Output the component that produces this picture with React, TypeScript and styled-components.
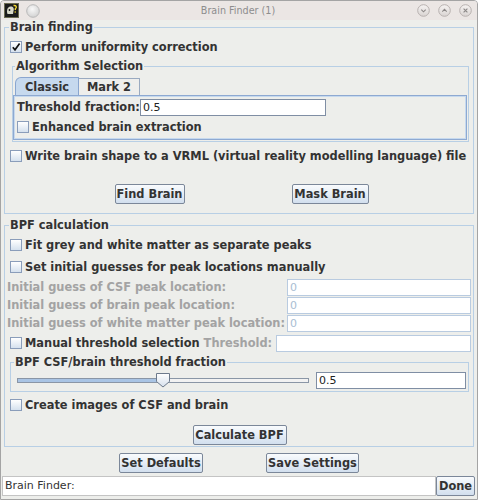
import React from 'react';
import styled, { createGlobalStyle } from 'styled-components';

const GlobalStyle = createGlobalStyle`
  html, body { margin: 0; padding: 0; background: #ffffff; }
  body { font-family: "DejaVu Sans", "Liberation Sans", sans-serif; }
  * { box-sizing: border-box; }
`;

const Frame = styled.div`
  width: 478px;
  height: 500px;
  border: 1px solid #a4a4a4;
  border-radius: 4px 4px 0 0;
  background: #edeeeb;
  display: flex;
  flex-direction: column;
  overflow: hidden;
`;

const TitleBar = styled.div`
  height: 19px;
  display: grid;
  grid-template-columns: 1fr auto 1fr;
  align-items: center;
  padding: 0 5px 0 3px;
  background: #ebe6e4;
  color: #8d8d8d;
  font-size: 9.6px;
`;

const TitleGroup = styled.div<{ $end?: boolean }>`
  display: flex;
  align-items: center;
  gap: ${(p) => (p.$end ? 8 : 7)}px;
  justify-content: ${(p) => (p.$end ? 'flex-end' : 'flex-start')};
`;

const Body = styled.div`
  flex: 1;
  display: flex;
  flex-direction: column;
  padding: 0 3px 0 3px;
`;

const Section = styled.fieldset<{ $mt?: number; $pad: string }>`
  margin: ${(p) => p.$mt ?? 0}px 0 0 0;
  padding: ${(p) => p.$pad};
  border: 1px solid #b8cfe5;
  min-width: 0;
  display: flex;
  flex-direction: column;
`;

const SubSection = styled(Section)<{ $ml?: number }>`
  margin-left: ${(p) => p.$ml ?? 0}px;
`;

const Legend = styled.legend<{ $shift?: number }>`
  padding: 0 1px;
  margin-left: ${(p) => p.$shift ?? 0}px;
  font-weight: bold;
  font-size: 11.4px;
  line-height: 14px;
  color: #333333;
`;

const Row = styled.div<{ $h: number; $mt?: number; $mx?: string }>`
  display: flex;
  align-items: center;
  height: ${(p) => p.$h}px;
  margin: ${(p) => p.$mt ?? 0}px ${(p) => p.$mx ?? '0 0'};
  margin-top: ${(p) => p.$mt ?? 0}px;
  margin-bottom: 0;
  white-space: nowrap;
`;

const Label = styled.span<{ $muted?: boolean; $w?: number }>`
  font-weight: bold;
  font-size: 11.4px;
  color: ${(p) => (p.$muted ? '#a3a3a3' : '#333333')};
  ${(p) => (p.$w ? `width: ${p.$w}px; flex: none;` : '')}
`;

const Box = styled.span`
  width: 12px;
  height: 12px;
  flex: none;
  margin-right: 3px;
  border: 1px solid #8a9dba;
  background: linear-gradient(#ffffff, #d5e1ee);
  display: flex;
  align-items: center;
  justify-content: center;
`;

const Field = styled.div<{ $w?: number; $disabled?: boolean; $h?: number }>`
  height: ${(p) => p.$h ?? 17}px;
  ${(p) => (p.$w ? `width: ${p.$w}px; flex: none;` : 'flex: 1;')}
  background: #ffffff;
  border: 1px solid ${(p) => (p.$disabled ? '#b9cbe0' : '#7f8ea4')};
  color: ${(p) => (p.$disabled ? '#a9bdd3' : '#222222')};
  font-size: 11px;
  line-height: 15px;
  padding: 0 2px;
  overflow: hidden;
`;

const Tabs = styled.div`
  display: flex;
  align-items: flex-end;
  height: 18px;
  margin-top: 4px;
  padding-left: 2px;
`;

const Tab = styled.div<{ $active?: boolean; $w: number }>`
  width: ${(p) => p.$w}px;
  height: ${(p) => (p.$active ? 18 : 17)}px;
  display: flex;
  align-items: center;
  justify-content: center;
  font-weight: bold;
  font-size: 11.4px;
  color: #333333;
  background: ${(p) => (p.$active ? '#c6d9ee' : '#eeeeec')};
  border: 1px solid ${(p) => (p.$active ? '#8aa6cf' : '#9aaac0')};
  border-bottom: none;
  border-left: ${(p) => (p.$active ? '1px solid #8aa6cf' : 'none')};
  border-radius: ${(p) => (p.$active ? '6px 0 0 0' : '0')};
`;

const TabPanel = styled.div`
  height: 45px;
  margin-right: 1px;
  border: 1px solid #8ea9d1;
  box-shadow: inset 0 0 0 1px #c6d9ee;
  padding: 2px 3px 0 3px;
  display: flex;
  flex-direction: column;
  gap: 2px;
`;

const ButtonRow = styled.div<{ $mt: number; $gap: number; $pl?: number }>`
  display: flex;
  justify-content: center;
  gap: ${(p) => p.$gap}px;
  margin-top: ${(p) => p.$mt}px;
  padding-left: ${(p) => p.$pl ?? 0}px;
`;

const Button = styled.button<{ $w: number; $h?: number }>`
  width: ${(p) => p.$w}px;
  height: ${(p) => p.$h ?? 20}px;
  flex: none;
  padding: 0;
  font-family: inherit;
  font-weight: bold;
  font-size: 11.4px;
  color: #333333;
  border: 1px solid #7b8799;
  border-radius: 2px;
  background: linear-gradient(#f9fbfd, #d2dfee);
`;

const SliderTrack = styled.div`
  position: relative;
  flex: 1;
  height: 17px;
  margin-right: 7px;
`;

const TrackFill = styled.div`
  position: absolute;
  left: 0;
  right: 0;
  top: 6px;
  height: 5px;
  border: 1px solid #8a96a6;
  background: linear-gradient(to right, #a9c4e4 50%, #f2f2f2 50%);
`;

const Thumb = styled.svg`
  position: absolute;
  top: 1px;
  left: calc(50% - 7px);
`;

const Status = styled.div`
  display: flex;
  height: 20px;
  margin: 3px -1px 0 -2px;
`;

const StatusField = styled.div`
  flex: 1;
  background: #ffffff;
  border: 1px solid #c4c4c4;
  font-size: 11px;
  color: #333333;
  line-height: 17px;
  padding-left: 2px;
`;

const TitleButton: React.FC<{ kind: 'min' | 'max' | 'close' }> = ({ kind }) => (
  <svg width="13" height="13" viewBox="0 0 13 13">
    <defs>
      <linearGradient id={`tb-${kind}`} x1="0" y1="0" x2="0" y2="1">
        <stop offset="0" stopColor="#f6f3f2" />
        <stop offset="1" stopColor="#d9d4d2" />
      </linearGradient>
    </defs>
    <circle cx="6.5" cy="6.5" r="5.8" fill={`url(#tb-${kind})`} stroke="#b7b1af" />
    {kind === 'min' && <path d="M4.3 5.6 L6.5 7.8 L8.7 5.6" fill="none" stroke="#8b8786" strokeWidth="1.1" />}
    {kind === 'max' && <path d="M4.3 7.6 L6.5 5.4 L8.7 7.6" fill="none" stroke="#8b8786" strokeWidth="1.1" />}
    {kind === 'close' && (
      <path d="M4.6 4.6 L8.4 8.4 M8.4 4.6 L4.6 8.4" fill="none" stroke="#8b8786" strokeWidth="1.1" />
    )}
  </svg>
);

const AppIcon = () => (
  <svg width="15" height="15" viewBox="0 0 15 15">
    <rect x="0.5" y="0.5" width="14" height="14" fill="#1b1b1b" stroke="#6a6a50" />
    <path d="M3.5 11 C2.5 8 3 4 6.5 3.5 C9 3.3 10.5 5.5 9.5 8 L9 11 Z" fill="#d8d8c8" />
    <circle cx="5.5" cy="7" r="0.9" fill="#1b1b1b" />
    <path d="M9.5 2.5 C12.5 2 13 4.5 11.5 5.5 L11.2 7" fill="none" stroke="#f0d630" strokeWidth="1.4" />
    <circle cx="11.2" cy="9" r="0.8" fill="#f0d630" />
  </svg>
);

const PinButton = () => (
  <svg width="14" height="14" viewBox="0 0 14 14">
    <defs>
      <radialGradient id="pin" cx="0.45" cy="0.35" r="0.7">
        <stop offset="0" stopColor="#f8f8f8" />
        <stop offset="1" stopColor="#cfcfcf" />
      </radialGradient>
    </defs>
    <circle cx="7" cy="7" r="6.3" fill="url(#pin)" stroke="#b9b9b9" />
  </svg>
);

const Check: React.FC<{ on?: boolean; label: string }> = ({ on, label }) => (
  <>
    <Box>
      {on && (
        <svg width="10" height="10" viewBox="0 0 10 10">
          <path d="M1.8 5.2 L4 7.8 L8.6 1.6" fill="none" stroke="#111" strokeWidth="1.7" />
        </svg>
      )}
    </Box>
    <Label>{label}</Label>
  </>
);

export default function App() {
  return (
    <Frame>
      <GlobalStyle />
      <TitleBar>
        <TitleGroup>
          <AppIcon />
          <PinButton />
        </TitleGroup>
        <span>Brain Finder (1)</span>
        <TitleGroup $end>
          <TitleButton kind="min" />
          <TitleButton kind="max" />
          <TitleButton kind="close" />
        </TitleGroup>
      </TitleBar>
      <Body>
        <Section $pad="4px 4px 9px 5px">
          <Legend $shift={-1}>Brain finding</Legend>
          <Row $h={18}>
            <Check on label="Perform uniformity correction" />
          </Row>
          <SubSection $mt={3} $ml={2} $pad="0 0 1px 0">
            <Legend $shift={2}>Algorithm Selection</Legend>
            <Tabs>
              <Tab $active $w={64}>Classic</Tab>
              <Tab $w={61}>Mark 2</Tab>
            </Tabs>
            <TabPanel>
              <Row $h={18}>
                <Label $w={123}>Threshold fraction:</Label>
                <Field $w={186}>0.5</Field>
              </Row>
              <Row $h={18} $mx="0 0 0 1px">
                <Check label="Enhanced brain extraction" />
              </Row>
            </TabPanel>
          </SubSection>
          <Row $h={18} $mt={5}>
            <Check label="Write brain shape to a VRML (virtual reality modelling language) file" />
          </Row>
          <ButtonRow $mt={19} $gap={107} $pl={4}>
            <Button $w={70}>Find Brain</Button>
            <Button $w={77}>Mask Brain</Button>
          </ButtonRow>
        </Section>

        <Section $mt={4} $pad="2px 4px 1px 5px">
          <Legend $shift={-1}>BPF calculation</Legend>
          <Row $h={22}>
            <Check label="Fit grey and white matter as separate peaks" />
          </Row>
          <Row $h={22}>
            <Check label="Set initial guesses for peak locations manually" />
          </Row>
          <Row $h={18} $mx="-2px 0 -3px">
            <Label $muted $w={280}>Initial guess of CSF peak location:</Label>
            <Field $disabled>0</Field>
          </Row>
          <Row $h={18} $mx="-2px 0 -3px">
            <Label $muted $w={280}>Initial guess of brain peak location:</Label>
            <Field $disabled>0</Field>
          </Row>
          <Row $h={18} $mx="-2px 0 -3px">
            <Label $muted $w={280}>Initial guess of white matter peak location:</Label>
            <Field $disabled>0</Field>
          </Row>
          <Row $h={18} $mt={2} $mx="-2px 0 0">
            <Check label="Manual threshold selection" />
            <Label $muted style={{ marginLeft: 4, marginRight: 4 }}>Threshold:</Label>
            <Field $disabled />
          </Row>
          <SubSection $mt={3} $pad="0 2px 2px 6px">
            <Legend $shift={-3}>BPF CSF/brain threshold fraction</Legend>
            <Row $h={17} $mt={3}>
              <SliderTrack>
                <TrackFill />
                <Thumb width="14" height="15" viewBox="0 0 14 15">
                  <defs>
                    <linearGradient id="thumb" x1="0" y1="0" x2="0" y2="1">
                      <stop offset="0" stopColor="#ffffff" />
                      <stop offset="1" stopColor="#d6e0ec" />
                    </linearGradient>
                  </defs>
                  <path d="M0.5 0.5 H13.5 V8.5 L7 14 L0.5 8.5 Z" fill="url(#thumb)" stroke="#6d7a8c" />
                </Thumb>
              </SliderTrack>
              <Field $w={150}>0.5</Field>
            </Row>
          </SubSection>
          <Row $h={18} $mt={4}>
            <Check label="Create images of CSF and brain" />
          </Row>
          <ButtonRow $mt={11} $gap={0}>
            <Button $w={94}>Calculate BPF</Button>
          </ButtonRow>
        </Section>

        <ButtonRow $mt={6} $gap={63}>
          <Button $w={84}>Set Defaults</Button>
          <Button $w={93}>Save Settings</Button>
        </ButtonRow>
        <Status>
          <StatusField>Brain Finder:</StatusField>
          <Button $w={39}>Done</Button>
        </Status>
      </Body>
    </Frame>
  );
}
